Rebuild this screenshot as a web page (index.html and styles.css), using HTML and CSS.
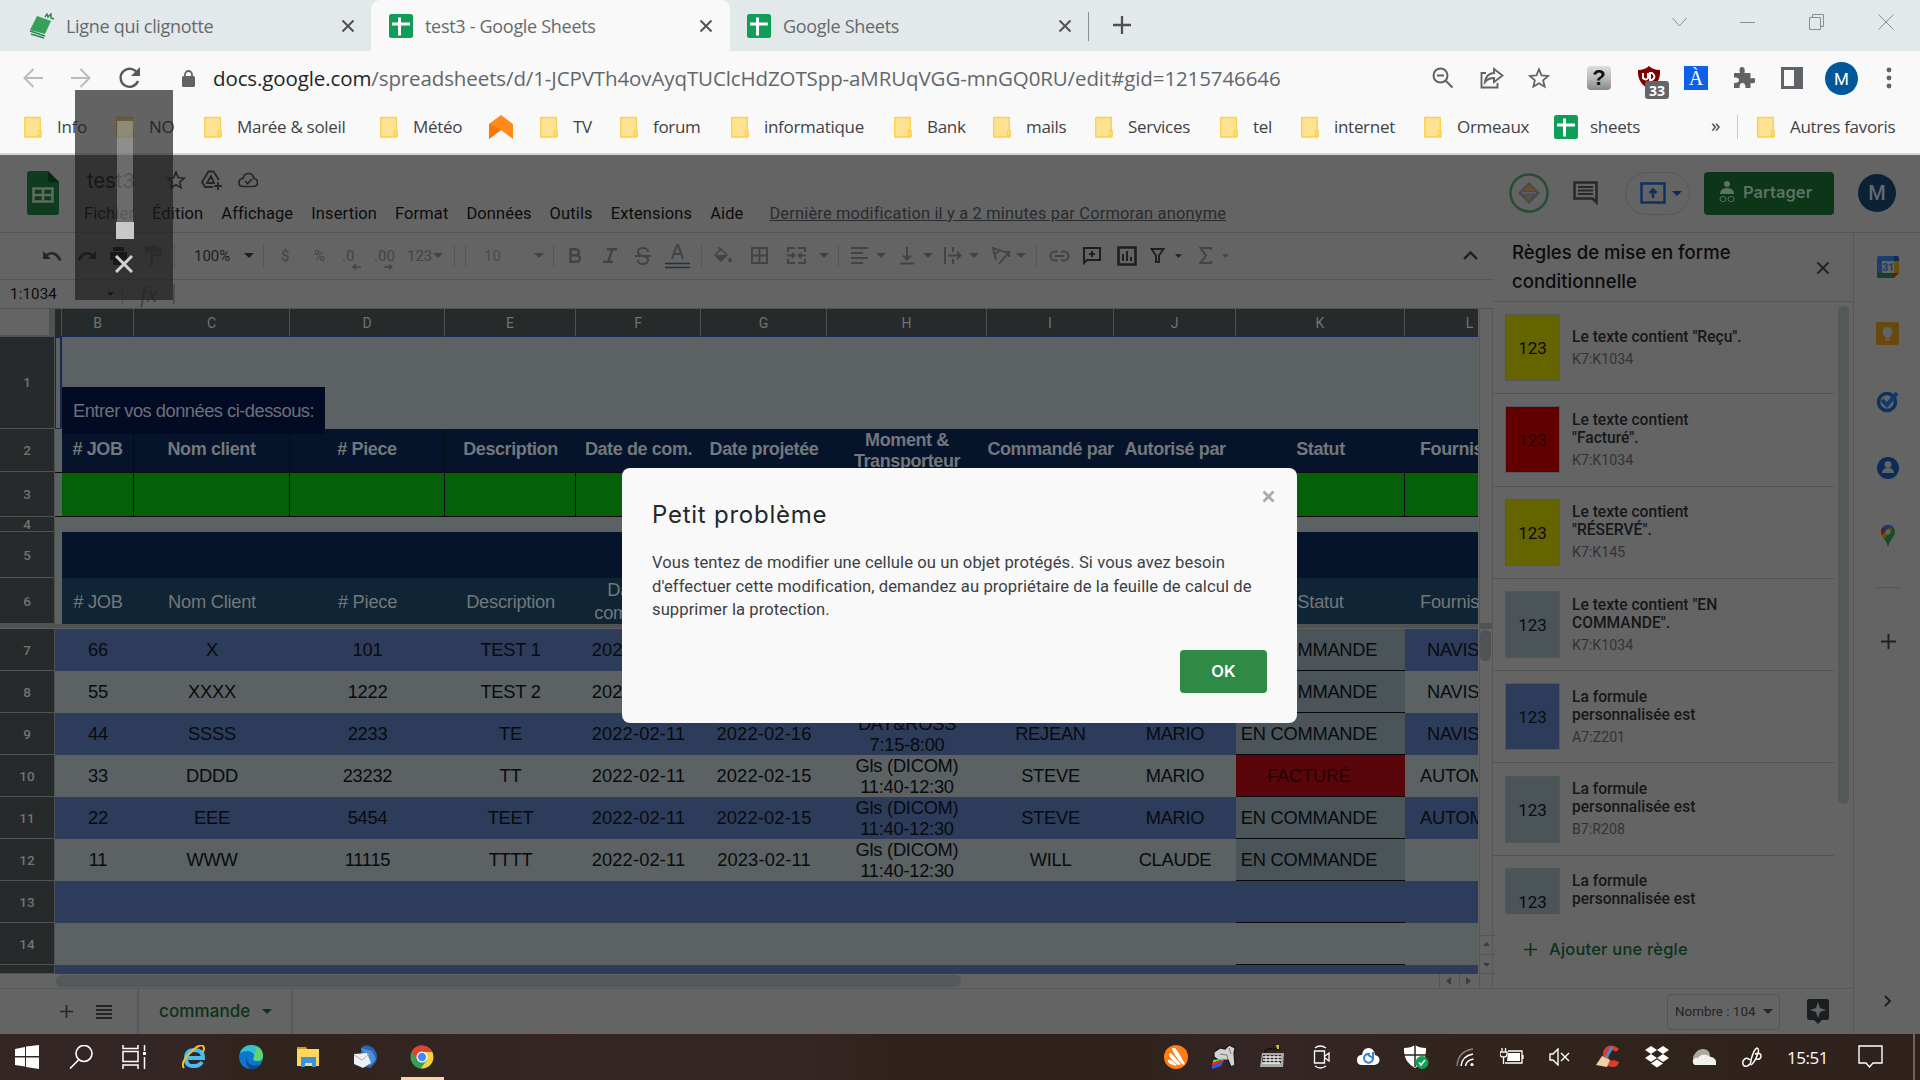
FILE: index.html
```html
<!DOCTYPE html>
<html lang="fr">
<head>
    <meta charset="UTF-8">
    <title>test3 - Google Sheets</title>
    <link rel="stylesheet" href="styles.css">
</head>
<body>

<!-- shared icons -->
<svg class="sprite">
    <symbol id="folder" viewBox="0 0 18 22"><path d="M0 1h16.500v13.500h1.500V21H0z" fill="#fde293"/><path d="M.8 1.500h15.500V14M17 21H.8V1M14.500 20v-5q1.500-2 2.500 0v5z" fill="none" stroke="#fbd04c" stroke-width="1.300"/></symbol>
    <symbol id="sheets" viewBox="0 0 24 24"><rect width="24" height="24" rx="2.500" fill="#0f9d58"/><path d="M3 10h18M10.500 3.500v18" stroke="#fff" stroke-width="3"/></symbol>
    <symbol id="close" viewBox="0 0 14 14"><path d="M1.500 1.500l11 11M12.500 1.500l-11 11" stroke="currentColor" stroke-width="1.900"/></symbol>
    <symbol id="caret" viewBox="0 0 10 5"><path d="M0 0h10L5 5z" fill="currentColor"/></symbol>
    <symbol id="plus" viewBox="0 0 18 18"><path d="M9 0v18M0 9h18" stroke="currentColor" stroke-width="2.300"/></symbol>
    <symbol id="star" viewBox="0 0 24 24"><path d="M12 2.500l2.800 6.700 7.200.6-5.500 4.700 1.700 7L12 17.700l-6.200 3.800 1.700-7L2 9.800l7.200-.6z" fill="none" stroke="currentColor" stroke-width="1.900"/></symbol>
    <symbol id="undo" viewBox="0 0 20 12"><path d="M1 1v8h8L5.800 6q6-4.500 11.200 5l2.500-1Q14-2 4 4z" fill="currentColor"/></symbol>
</svg>

<div class="tabs">
    <div class="tab tab-first">
        <svg width="26" height="26" viewBox="0 0 26 26"><path d="M8 3l14 5-6 13-15-4z" fill="#34a05a"/><path d="M1 18l15 5M2 21l13 4M16 4l2-3 1 3 3-3v4l3 1" stroke="#2b8a4c" stroke-width="1.500" fill="none"/></svg>
        <span>Ligne qui clignotte</span>
        <svg class="x" width="14" height="14"><use href="#close"/></svg>
    </div>
    <div class="tab tab-active">
        <svg width="24" height="24"><use href="#sheets"/></svg>
        <span>test3 - Google Sheets</span>
        <svg class="x" width="14" height="14"><use href="#close"/></svg>
    </div>
    <div class="tab tab-last">
        <svg width="24" height="24"><use href="#sheets"/></svg>
        <span>Google Sheets</span>
        <svg class="x" width="14" height="14"><use href="#close"/></svg>
    </div>
    <svg class="newtab" width="18" height="18"><use href="#plus"/></svg>
    <div class="winbtns">
        <svg width="15" height="16"><path d="M.5 4l7 8 7-8" fill="none" stroke="#8b8e90"/></svg>
        <svg width="15" height="16"><path d="M0 8.500h15" stroke="#8b8e90"/></svg>
        <svg width="16" height="16"><path d="M.5 3.500h11v12h-11zM3.500 3V.5h11v12H12" fill="none" stroke="#8b8e90"/></svg>
        <svg width="16" height="16"><path d="M.5.5l15 15M15.500.5l-15 15" stroke="#8b8e90"/></svg>
    </div>
</div>

<div class="address">
    <svg width="20" height="20"><path d="M20 10H2M10.500 1l-9 9 9 9" fill="none" stroke="#b9bcbe" stroke-width="2"/></svg>
    <svg width="20" height="20"><path d="M0 10h18M9.500 1l9 9-9 9" fill="none" stroke="#b9bcbe" stroke-width="2"/></svg>
    <svg width="22" height="22"><path d="M18.500 6.500A9 9 0 1 0 19 14" fill="none" stroke="#55595c" stroke-width="2.300"/><path d="M21 0v9h-9z" fill="#55595c"/></svg>
    <svg width="13" height="17"><rect y="6" width="13" height="11" rx="1.500" fill="#5f6368"/><path d="M3 7V4.500a3.500 3.500 0 0 1 7 0V7" fill="none" stroke="#5f6368" stroke-width="1.800"/></svg>
    <div class="url"><b>docs.google.com</b>/spreadsheets/d/1-JCPVTh4ovAyqTUClcHdZOTSpp-aMRUqVGG-mnGQ0RU/edit#gid=1215746646</div>
    <svg width="22" height="22"><circle cx="8.500" cy="8.500" r="7" fill="none" stroke="#5f6368" stroke-width="2"/><path d="M5 8.500h7M13.500 13.500l7 7" stroke="#5f6368" stroke-width="2"/></svg>
    <svg width="24" height="22"><path d="M6 6H1.500v14.500h16V16M14 2l8.500 6.500L14 15v-4q-6 0-9 4 1-8.500 9-9z" fill="none" stroke="#5f6368" stroke-width="1.900"/></svg>
    <svg class="grey" width="22" height="24"><use href="#star"/></svg>
    <div class="ext-help">?</div>
    <div class="ublock"><svg width="24" height="24"><path d="M1 4q7 0 11-4 4 4 11 4 1 13-11 19Q0 17 1 4z" fill="#800000"/><path d="M6 7v5q3 3 5 0V7M13 7v7h2q5-3.500 0-7z" fill="none" stroke="#fff" stroke-width="2"/></svg><span>33</span></div>
    <div class="ext-a">À</div>
    <svg width="22" height="22"><path d="M1 6h6q-1.500-6 2-6t2.500 6h6v5.500q5-1.500 5 2t-5 2.500V21h-5q0-5-3-5t-3 5H1v-5q5 0 5-3t-5-2.500z" fill="#5f6368"/></svg>
    <svg width="22" height="22"><path d="M1.500 1.500h19v19h-19z" fill="none" stroke="#5f6368" stroke-width="3"/><path d="M13 0h9v22h-9z" fill="#5f6368"/></svg>
    <div class="avatar">M</div>
    <svg width="6" height="22"><circle cx="3" cy="3" r="2.400" fill="#5f6368"/><circle cx="3" cy="11" r="2.400" fill="#5f6368"/><circle cx="3" cy="19" r="2.400" fill="#5f6368"/></svg>
</div>

<div class="bookmarks">
    <div class="bm"><svg><use href="#folder"/></svg>Info</div>
    <div class="bm"><svg><use href="#folder"/></svg>NO</div>
    <div class="bm"><svg><use href="#folder"/></svg>Marée &amp; soleil</div>
    <div class="bm"><svg><use href="#folder"/></svg>Météo</div>
    <div class="bm"><svg class="flame" viewBox="0 0 24 24"><path d="M0 9L12 0l12 9v15l-12-9-12 9z" fill="#ff8a1c"/><path d="M0 9v15l12-9z" fill="#ff7409"/></svg></div>
    <div class="bm"><svg><use href="#folder"/></svg>TV</div>
    <div class="bm"><svg><use href="#folder"/></svg>forum</div>
    <div class="bm"><svg><use href="#folder"/></svg>informatique</div>
    <div class="bm"><svg><use href="#folder"/></svg>Bank</div>
    <div class="bm"><svg><use href="#folder"/></svg>mails</div>
    <div class="bm"><svg><use href="#folder"/></svg>Services</div>
    <div class="bm"><svg><use href="#folder"/></svg>tel</div>
    <div class="bm"><svg><use href="#folder"/></svg>internet</div>
    <div class="bm"><svg><use href="#folder"/></svg>Ormeaux</div>
    <div class="bm bm-sheet"><svg><use href="#sheets"/></svg>sheets</div>
    <div class="bm more">»</div>
    <div class="bm-sep"></div>
    <div class="bm"><svg><use href="#folder"/></svg>Autres favoris</div>
</div>

<div class="docs">
    <header class="dochead">
        <svg class="logo" width="32" height="44"><path d="M3 0h18l11 11v30q0 3-3 3H3q-3 0-3-3V3q0-3 3-3z" fill="#0f3b1f"/><path d="M21 0l11 11H21z" fill="#092812"/><path d="M6.500 17.500h19v13h-19zM16 17v14M6 24h20" fill="none" stroke="#5d6b61" stroke-width="2.600"/></svg>
        <div class="headmain">
            <div class="title">
                <span>test3</span>
                <svg width="20" height="20"><use href="#star"/></svg>
                <svg width="22" height="20"><path d="M12 17H4l-3-5L7.500 1.500h5L18 10M10 6l-4 7h7zM13 16h8M17 12v8" fill="none" stroke="currentColor" stroke-width="1.800"/></svg>
                <svg width="20" height="16"><path d="M5 14.500q-4 0-4-4t4-4Q6 1.500 10.500 1.500T16 6.500q3.500.5 3.500 4t-3.500 4zM7 9l2.500 2.500L14 7" fill="none" stroke="currentColor" stroke-width="1.700"/></svg>
            </div>
            <nav class="menu">
                <span>Fichier</span><span>Édition</span><span>Affichage</span><span>Insertion</span><span>Format</span><span>Données</span><span>Outils</span><span>Extensions</span><span>Aide</span>
                <span class="lastedit">Dernière modification il y a 2 minutes par Cormoran anonyme</span>
            </nav>
        </div>
        <div class="headright">
            <svg width="40" height="40"><circle cx="20" cy="20" r="18.500" fill="none" stroke="#294d34" stroke-width="2.500"/><path d="M20 9l11 11-11 11L9 20z" fill="#434a50"/><path d="M20 12l7 6H13zM15 22h10l-5 6z" fill="#6a4f2c"/><path d="M13 20h14" stroke="#5b5f62" stroke-width="2"/></svg>
            <svg width="25" height="24"><path d="M1.500 1.500h22v20l-4-4h-18z" fill="none" stroke="#262829" stroke-width="2.500"/><path d="M5 6h15M5 9.500h15M5 13h15" stroke="#262829" stroke-width="2"/></svg>
            <div class="present">
                <svg width="26" height="22"><path d="M1.500 1.500h23v19h-23z" fill="none" stroke="#10305f" stroke-width="2.500"/><path d="M13 16V8M9.500 11l3.500-3.500 3.500 3.500" fill="none" stroke="#10305f" stroke-width="2.500"/></svg>
                <svg width="10" height="5"><use href="#caret"/></svg>
            </div>
            <div class="share">
                <svg width="16" height="22"><circle cx="8" cy="3" r="3" fill="#5e7263"/><path d="M1 13q0-6 7-6t7 6z" fill="#5e7263"/><rect x="1" y="15.500" width="6" height="5" rx="2.500" fill="none" stroke="#5e7263"/><rect x="9" y="15.500" width="6" height="5" rx="2.500" fill="none" stroke="#5e7263"/></svg>
                Partager
            </div>
            <div class="me">M</div>
        </div>
    </header>

    <div class="work">
        <div class="left">
            <div class="toolbar">
                <svg width="20" height="12"><use href="#undo"/></svg>
                <svg class="flip" width="20" height="12"><use href="#undo"/></svg>
                <svg width="19" height="18"><path d="M4 0h11v4H4zM1 5h17v8h-3v5H4v-5H1z" fill="#111"/></svg>
                <svg class="dim" width="17" height="20"><path d="M0 0h13v2h3.500v8H8v10H5V8h9V4h-1v3H0z" fill="currentColor"/></svg>
                <i></i>
                <span class="dark">100%</span>
                <svg class="dark" width="10" height="5"><use href="#caret"/></svg>
                <i></i>
                <span>$</span>
                <span>%</span>
                <span class="dec">.0<svg width="9" height="6"><path d="M9 3H1M4 .5L1 3l3 2.500" fill="none" stroke="currentColor" stroke-width="1.300"/></svg></span>
                <span class="dec">.00<svg width="9" height="6"><path d="M0 3h8M5 .5L8 3 5 5.500" fill="none" stroke="currentColor" stroke-width="1.300"/></svg></span>
                <span>123</span>
                <svg width="10" height="5"><use href="#caret"/></svg>
                <i></i><i></i>
                <span class="dim">10</span>
                <svg width="10" height="5"><use href="#caret"/></svg>
                <i></i>
                <svg width="12" height="15" viewBox="0 0 12 15"><path d="M1.500 1.200h4.500q4 0 4 3t-4 3H2zM2 7.300h5q4 0 4 3.200t-4 3.200H1.500V1" fill="none" stroke="currentColor" stroke-width="2.400"/></svg>
                <svg width="14" height="15"><path d="M4 1.200h10M0 13.800h10M9.500 1L5 14" fill="none" stroke="currentColor" stroke-width="2.400"/></svg>
                <svg width="16" height="18"><path d="M13 5q0-4-5-4T3 5q0 3 5 4 5 .5 5 4t-5 4-5-4M0 9h16" fill="none" stroke="currentColor" stroke-width="1.900"/></svg>
                <svg width="25" height="26"><path d="M7 16L12 2h1l5 14M9 11h7" fill="none" stroke="currentColor" stroke-width="2"/><path d="M0 20.500h25M0 24.500h25" stroke="#27303f" stroke-width="1.500"/></svg>
                <i></i>
                <svg width="19" height="18"><path d="M1 8l6-6 6 6-6 6zM4 0l4 4" stroke="currentColor" fill="none" stroke-width="1.500"/><path d="M1 8h12l-6 6.500zM16 10q4 5 0 5t0-5z" fill="currentColor"/></svg>
                <svg width="17" height="17"><path d="M1 1h15v15H1zM8.500 1v15M1 8.500h15" fill="none" stroke="currentColor" stroke-width="1.900"/></svg>
                <svg width="19" height="17"><path d="M8 1H1v4M11 1h7v4M8 16H1v-4M11 16h7v-4M0 8.500h7M12 8.500h7M5 6l2.500 2.500L5 11M14 6l-2.500 2.500L14 11" fill="none" stroke="currentColor" stroke-width="1.900"/></svg>
                <svg width="10" height="5"><use href="#caret"/></svg>
                <i></i>
                <svg width="17" height="17"><path d="M0 1h17M0 6h12M0 11h17M0 16h12" stroke="currentColor" stroke-width="1.900"/></svg>
                <svg width="10" height="5"><use href="#caret"/></svg>
                <svg width="16" height="18"><path d="M8 0v12M4 8.500l4 4 4-4M1 16.500h14" fill="none" stroke="currentColor" stroke-width="1.900"/></svg>
                <svg width="10" height="5"><use href="#caret"/></svg>
                <svg width="18" height="17"><path d="M1 0v17M9 0v5M9 12v5M4 8.500h12M13 5l3.500 3.500L13 12" fill="none" stroke="currentColor" stroke-width="1.900"/></svg>
                <svg width="10" height="5"><use href="#caret"/></svg>
                <svg width="19" height="18"><path d="M4 13L1 1l12 4M2 8l6-5M7 17L17 5M12 5h5v5" fill="none" stroke="currentColor" stroke-width="1.800"/></svg>
                <svg width="10" height="5"><use href="#caret"/></svg>
                <i></i>
                <svg width="21" height="12"><path d="M9 1.500H6a4.500 4.500 0 0 0 0 9h3M12 1.500h3a4.500 4.500 0 0 1 0 9h-3M6 6h9" fill="none" stroke="currentColor" stroke-width="1.900"/></svg>
                <svg class="dark" width="18" height="18"><path d="M1 1h16v12H4l-3 3zM9 4v6M6 7h6" fill="none" stroke="currentColor" stroke-width="2"/></svg>
                <svg class="dark" width="20" height="20"><path d="M1.500 1.500h17v17h-17z" fill="none" stroke="currentColor" stroke-width="2.600"/><path d="M6 8v7M10 5v10M14 11v4" stroke="currentColor" stroke-width="2"/></svg>
                <svg class="dark" width="15" height="16"><path d="M1.500 1h12L9 7.500V14H6V7.500z" fill="none" stroke="currentColor" stroke-width="1.900"/></svg>
                <svg class="dark" width="7" height="4"><use href="#caret"/></svg>
                <svg width="13" height="17"><path d="M12 3V1H1.500L7 8.500 1.500 16H12v-2" fill="none" stroke="currentColor" stroke-width="2"/></svg>
                <svg width="7" height="4"><use href="#caret"/></svg>
                <svg class="dark" width="15" height="9"><path d="M1 8l6.500-6.500L14 8" fill="none" stroke="currentColor" stroke-width="2.400"/></svg>
            </div>
            <div class="formula">
                <span>1:1034</span>
                <svg width="7" height="4"><use href="#caret"/></svg>
                <em>fx</em>
            </div>

            <div class="gridwrap">
                <div class="sheet">
                    <div class="row colhead"><b></b><b></b><b>B</b><b>C</b><b>D</b><b>E</b><b>F</b><b>G</b><b>H</b><b>I</b><b>J</b><b>K</b><b>L</b></div>
                    <div class="row r1"><b>1</b><div class="sel"></div><div class="banner">Entrer vos données ci-dessous:</div></div>
                    <div class="row r2 navy"><b>2</b><div></div><div># JOB</div><div>Nom client</div><div># Piece</div><div>Description</div><div>Date de com.</div><div>Date projetée</div><div>Moment &amp; Transporteur</div><div>Commandé par</div><div>Autorisé par</div><div>Statut</div><div>Fournisseur</div></div>
                    <div class="row r3"><b>3</b><div></div><div></div><div></div><div></div><div></div><div></div><div></div><div></div><div></div><div></div><div></div><div></div></div>
                    <div class="row r4"><b>4</b></div>
                    <div class="row r5 navy"><b>5</b><div></div><div></div></div>
                    <div class="row r6"><b>6</b><div></div><div># JOB</div><div>Nom Client</div><div># Piece</div><div>Description</div><div>Date de<br>commande</div><div></div><div></div><div></div><div></div><div>Statut</div><div>Fournisseur</div></div>
                    <div class="freeze"></div>
                    <div class="row data odd"><b>7</b><div></div><div>66</div><div>X</div><div>101</div><div>TEST 1</div><div class="d">2022-02-11</div><div></div><div></div><div></div><div></div><div>EN COMMANDE</div><div class="nav">NAVISTAR</div></div>
                    <div class="row data"><b>8</b><div></div><div>55</div><div>XXXX</div><div>1222</div><div>TEST 2</div><div class="d">2022-02-11</div><div></div><div></div><div></div><div></div><div>EN COMMANDE</div><div class="nav">NAVISTAR</div></div>
                    <div class="row data odd"><b>9</b><div></div><div>44</div><div>SSSS</div><div>2233</div><div>TE</div><div class="d">2022-02-11</div><div class="d">2022-02-16</div><div>DAY&amp;ROSS<br>7:15-8:00</div><div>REJEAN</div><div>MARIO</div><div>EN COMMANDE</div><div class="nav">NAVISTAR</div></div>
                    <div class="row data"><b>10</b><div></div><div>33</div><div>DDDD</div><div>23232</div><div>TT</div><div class="d">2022-02-11</div><div class="d">2022-02-15</div><div>Gls (DICOM)<br>11:40-12:30</div><div>STEVE</div><div>MARIO</div><div class="red">FACTURÉ</div><div>AUTOMANN</div></div>
                    <div class="row data odd"><b>11</b><div></div><div>22</div><div>EEE</div><div>5454</div><div>TEET</div><div class="d">2022-02-11</div><div class="d">2022-02-15</div><div>Gls (DICOM)<br>11:40-12:30</div><div>STEVE</div><div>MARIO</div><div>EN COMMANDE</div><div>AUTOMANN</div></div>
                    <div class="row data"><b>12</b><div></div><div>11</div><div>WWW</div><div>11115</div><div>TTTT</div><div class="d">2022-02-11</div><div class="d">2023-02-11</div><div>Gls (DICOM)<br>11:40-12:30</div><div>WILL</div><div>CLAUDE</div><div>EN COMMANDE</div><div></div></div>
                    <div class="row data odd empty"><b>13</b><div></div><div></div></div>
                    <div class="row data empty"><b>14</b><div></div><div></div></div>
                    <div class="row data odd last"><b></b></div>
                    <div class="hscroll">
                        <div class="hthumb"></div>
                        <svg width="38" height="14"><path d="M.5 0v14M20.500 0v14" stroke="#535657"/><path d="M12 3v8L7 7zM27 3v8l5-4z" fill="#3b3c3d"/></svg>
                    </div>
                </div>
                <div class="vscroll">
                    <div class="vbar"></div>
                    <div class="vthumb"></div>
                    <svg width="15" height="40"><path d="M0 .5h15M0 19.500h15M0 38.500h15" stroke="#535657"/><path d="M3 11h7L6.500 7zM3 28h7l-3.500 4z" fill="#3b3c3d"/></svg>
                </div>
            </div>
        </div>

        <aside class="panel">
            <div class="panelhead"><h2>Règles de mise en forme conditionnelle</h2><svg width="14" height="14"><use href="#close"/></svg></div>
            <div class="rules">
                <div class="list">
                    <div class="rule"><div class="sw yellow">123</div><p>Le texte contient "Reçu".<small>K7:K1034</small></p></div>
                    <div class="rule"><div class="sw crimson">123</div><p>Le texte contient "Facturé".<small>K7:K1034</small></p></div>
                    <div class="rule"><div class="sw yellow">123</div><p>Le texte contient "RÉSERVÉ".<small>K7:K145</small></p></div>
                    <div class="rule"><div class="sw slate">123</div><p>Le texte contient "EN COMMANDE".<small>K7:K1034</small></p></div>
                    <div class="rule"><div class="sw blue">123</div><p>La formule personnalisée est<small>A7:Z201</small></p></div>
                    <div class="rule"><div class="sw slate">123</div><p>La formule personnalisée est<small>B7:R208</small></p></div>
                    <div class="rule"><div class="sw slate">123</div><p>La formule personnalisée est<small>&nbsp;</small></p></div>
                </div>
                <div class="pthumb"></div>
            </div>
            <div class="addrule"><svg width="13" height="13"><use href="#plus"/></svg>Ajouter une règle</div>
        </aside>

        <div class="rail">
            <svg width="24" height="24"><path d="M3 1h15v5H6v12H1V3q0-2 2-2z" fill="#1c3c6d"/><path d="M18 1h3q2 0 2 2v3h-5z" fill="#152b4e"/><path d="M18 6h5v12h-5z" fill="#6a4f0c"/><path d="M1 18h17v5H3q-2 0-2-2z" fill="#0f4420"/><path d="M18 18h5l-5 5z" fill="#5f1b15"/><path d="M6 6h12v12H6z" fill="#616365"/><text x="6.500" y="16" font-size="10" font-weight="700" fill="#1c3c6d">31</text></svg>
            <svg width="24" height="24"><rect width="23" height="23" rx="2" fill="#67490f"/><circle cx="11.500" cy="10" r="5" fill="#636363"/><path d="M9 14h5v2H9zM9 17h5v1.500H9z" fill="#636363"/></svg>
            <svg width="24" height="24"><circle cx="11" cy="13" r="8.500" fill="none" stroke="#0b335c" stroke-width="3.500"/><path d="M6 11l5 5L21 4" fill="none" stroke="#0d3d70" stroke-width="4"/></svg>
            <svg width="24" height="24"><circle cx="12" cy="12" r="11" fill="#0b2c57"/><circle cx="12" cy="8.500" r="3.500" fill="#626364"/><path d="M6 17q0-5 6-5t6 5z" fill="#626364"/></svg>
            <svg width="24" height="24"><path d="M12 2a7 7 0 0 0-7 7q0 3 4 8 2 3 3 7 1-4 3-7 4-5 4-8a7 7 0 0 0-7-7z" fill="#164c25"/><path d="M12 2a7 7 0 0 0-6 3l5 4 6-6q-2-1-5-1z" fill="#1b3b68"/><path d="M6 5q-2 3 0 7l5-5z" fill="#5f1b15"/><path d="M6 12l8-8 2 3-8 9z" fill="#6a4f0c"/><circle cx="12" cy="9" r="2.600" fill="#646464"/></svg>
            <hr>
            <svg class="dark add" width="15" height="15"><use href="#plus"/></svg>
            <svg class="dark chev" width="8" height="12"><path d="M1 1l5 5-5 5" fill="none" stroke="currentColor" stroke-width="2"/></svg>
        </div>
    </div>

    <footer class="sheetbar">
        <svg width="13" height="13"><use href="#plus"/></svg>
        <svg width="16" height="14"><path d="M0 1h16M0 5h16M0 9h16M0 13h16" stroke="currentColor" stroke-width="2.200"/></svg>
        <div class="sheettab">commande<svg width="10" height="5"><use href="#caret"/></svg></div>
        <div class="count">Nombre : 104<svg width="10" height="5"><use href="#caret"/></svg></div>
        <svg width="22" height="25"><path d="M2 0h18q2 0 2 2v17q0 2-2 2h-5l-4 4-4-4H2q-2 0-2-2V2q0-2 2-2z" fill="#1b1f22"/><path d="M11 3l2 6 6 2-6 2-2 6-2-6-6-2 6-2z" fill="#646464"/></svg>
    </footer>
</div>

<div class="taskbar">
    <svg width="24" height="24"><path d="M0 4l10-2v9H0zM11 1.500L24 0v11H11zM0 12.500h10v9L0 20zM11 12.500h13V24l-13-2z" fill="#fff"/></svg>
    <svg width="24" height="24"><circle cx="15" cy="8.500" r="8" fill="none" stroke="#fff" stroke-width="1.600"/><path d="M9.500 15L1 23.500" stroke="#fff" stroke-width="1.600"/></svg>
    <svg width="25" height="24"><path d="M1 0v3.500h15V0M1 6.500h15v10H1zM1 24v-4h15v4M22.500 0v6M22.500 12v12" fill="none" stroke="#fff" stroke-width="1.500"/><path d="M21 7h3v3h-3z" fill="#fff"/></svg>
    <svg width="24" height="24"><path d="M6 13h15q0-8-8.500-8T4 13.500 12.500 21q5 0 7.500-4" fill="none" stroke="#48bdf2" stroke-width="4"/><path d="M2 23Q-2 18 8 8T21 1q2 2 0 6" fill="none" stroke="#f5bd24" stroke-width="2"/></svg>
    <svg width="24" height="24"><circle cx="12" cy="12" r="12" fill="#0b78d0"/><path d="M1 8Q4 0 12 0q11 0 12 10 0 6-6 6-5 0-3-4 1-5-6-6-5 0-8 2z" fill="#35c1d0"/><path d="M18 2q6 3 6 9 0 5-6 5-5 0-3-4z" fill="#61d66b"/><path d="M9 10q-3 7 3 9.500 5 2 9 0Q17 24 12 24q-8-4-3-14z" fill="#114a8b"/></svg>
    <svg width="23" height="24"><path d="M0 2h9l2 3H0z" fill="#d99a12"/><path d="M0 4h22v17H0z" fill="#ffd75e"/><path d="M4 12h15v10h-4v-4H8v4H4z" fill="#3894db"/></svg>
    <svg width="24" height="24"><path d="M8 3q4-5 11-1 5 4 5 10t-7 11L8 21z" fill="#2a62b6"/><path d="M8 3l11 3 4 8-6 7z" fill="#4c91d5"/><path d="M1 9l13-1 4 10-8 5-9-4z" fill="#eef0f3"/><path d="M1 10l8 5 7-6" fill="none" stroke="#a8afb8"/></svg>
    <svg width="24" height="24"><circle cx="12" cy="12" r="11.500" fill="#32a350"/><path d="M2 6Q5 .5 12 .5T22 7H12L6.500 15z" fill="#dd4437"/><path d="M12 7h10.300q3 9-3.300 14-4 3-8 2.300L17 15z" fill="#fdd03b"/><circle cx="12" cy="12" r="5.500" fill="#fff"/><circle cx="12" cy="12" r="4.200" fill="#4587f3"/></svg>
    <!-- notification area -->
    <svg width="24" height="24"><circle cx="12" cy="12" r="12" fill="#ff7d14"/><path d="M8 4q0-2 3-1 3 3 10 16-2 2-4-1Q9 8 8 4zM5 9q1-2 3 0l9 10q-2 2-4 0Q4 12 5 9zM4 15q3-1 9 5-2 1-4 0-6-2-5-5z" fill="#fff"/></svg>
    <svg width="24" height="24"><path d="M2 7l6-4 5 1 4-4 6 3-1 5 1 12-4 2-3-7-8 1-6-4z" fill="#d0d2d3" stroke="#161616" stroke-width="1.200"/><path d="M8 9l7 1 1 5M17 3l2 6" fill="none" stroke="#777"/><path d="M1 15l13-2-13 5z" fill="#42e455"/><path d="M0 18l13-4-2 3-11 4z" fill="#e22a2a"/><path d="M0 21l11-4-2 4-9 3z" fill="#3557ee"/></svg>
    <svg width="24" height="24"><path d="M2 8h22l-1 14H0z" fill="#a9aaa8"/><path d="M3 10h18v8H2z" fill="#2a2a2a"/><path d="M3 12h18M3 15h18M2 18h18" stroke="#eee" stroke-width="1.400"/><path d="M6 10v8M10 10v8M14 10v8M18 10v8" stroke="#eee"/><path d="M5 7q1-4 7-3t8-1" stroke="#0c0c0c" stroke-width="2" stroke-dasharray="2 1" fill="none"/><path d="M16 0h3v4h-2z" fill="#c5c220"/></svg>
    <svg width="18" height="24"><path d="M1.500 6h10v12h-10zM12 11l4-3v8l-4-3M2 3q5-4 11 0M2 21q5 4 11 0" fill="none" stroke="#fff" stroke-width="1.300"/></svg>
    <svg width="23" height="18"><path d="M5 17q-5 0-5-5t5-5Q6 0 11.500 0T18 7q4.500 1 4.500 5t-5 5z" fill="#fff"/><path d="M13 6a4.500 4.500 0 1 0 3 4M16 4v6l-5-3" fill="none" stroke="#3383dc" stroke-width="2"/></svg>
    <svg width="25" height="24"><path d="M0 3q7 0 11-3 4 3 11 3 1 14-11 20Q-1 17 0 3z" fill="#fff"/><path d="M11 0v22M0 10h22" stroke="#30241e" stroke-width="1.500"/><circle cx="18" cy="17.500" r="6.500" fill="#12a150"/><path d="M15 17.500l2 2.500 4-5" fill="none" stroke="#fff" stroke-width="1.600"/></svg>
    <svg width="18" height="18"><path d="M1 18Q2 3 17 1" fill="none" stroke="#8f8986" stroke-width="1.300"/><path d="M5 18Q6 8 17 6M9.500 18q1-6 8-7" fill="none" stroke="#fff" stroke-width="1.500"/><circle cx="16" cy="16.500" r="1.600" fill="#fff"/></svg>
    <svg width="24" height="18"><path d="M8 3h14v12H5M23 7v4" fill="none" stroke="#fff" stroke-width="1.300"/><path d="M8 5h12v8H7z" fill="#fff"/><path d="M2 0v3M5.500 0v3M0 4h7v2q0 3-3.500 3T0 6zM3.500 9v7" fill="none" stroke="#fff" stroke-width="1.300"/></svg>
    <svg width="22" height="18"><path d="M1 6h3l5-5v16l-5-5H1zM12 5l8 8M20 5l-8 8" fill="none" stroke="#fff" stroke-width="1.400"/></svg>
    <svg width="25" height="24"><path d="M23 4Q18-1 12 1 6 4 7 12q2 10 10 10 5 0 6-5l-5-2q-3 2-5-1-2-5 1-8 4-2 6 1z" fill="#db3c2b"/><path d="M16 2L10 13" stroke="#3f8ccd" stroke-width="3"/><path d="M6 11l8 4-3 7-11-2z" fill="#f2cfa4"/></svg>
    <svg width="24" height="22"><path d="M6 0l6 4-6 4-6-4zM18 0l6 4-6 4-6-4zM6 8l6 4-6 4-6-4zM18 8l6 4-6 4-6-4zM12 13.500l6 4-6 4-6-4z" fill="#fff"/></svg>
    <svg width="24" height="18"><path d="M1 9Q5 0 12 1q6 1 6 7l-5 5-12 2z" fill="#aca89c"/><path d="M3 17q-3-1-2-5 2-3 5-2 3-5 9-3 2 1 4 2 6 1 5 8z" fill="#f0f0ee"/></svg>
    <svg width="22" height="22"><path d="M8 14q-4-4-7 1-1 6 4 5 4-1 4-6 3-11 6-12 3 1 0 8t-6 9M13 8q6-2 6 2t-5 3" fill="none" stroke="#fff" stroke-width="1.500"/></svg>
    <time>15:51</time>
    <svg width="25" height="24"><path d="M1 1h23v17h-9l-3.500 4L8 18H1z" fill="none" stroke="#fff" stroke-width="1.400"/></svg>
    <div class="peek"></div>
</div>

<div class="modal">
    <svg width="13" height="13"><path d="M1.500 1.500l10 10M11.500 1.500l-10 10" stroke="currentColor" stroke-width="2.800"/></svg>
    <h1>Petit problème</h1>
    <p>Vous tentez de modifier une cellule ou un objet protégés. Si vous avez besoin<br>d'effectuer cette modification, demandez au propriétaire de la feuille de calcul de<br>supprimer la protection.</p>
    <button>OK</button>
</div>

<!-- floating volume slider -->
<div class="volume">
    <div class="track"></div>
    <div class="knob"></div>
    <svg width="18" height="18"><path d="M1 1l16 16M17 1L1 17" stroke="currentColor" stroke-width="3"/></svg>
</div>

</body>
</html>
```

FILE: styles.css
```css
* { box-sizing: border-box; }
body { margin: 0; width: 1920px; height: 1080px; overflow: hidden; background: #f9f9f9; font-family: Roboto, "Liberation Sans", sans-serif; }
svg { display: block; flex: none; }
.sprite { display: none; }

/* Browser chrome */
.tabs { display: flex; height: 51px; background: #e3e8ea; font: 18px "Open Sans", sans-serif; letter-spacing: -0.3px; color: #666a6d; }
.tab { display: flex; align-items: center; height: 51px; padding-bottom: 1px; }
.tab span { flex: 1; margin-left: 12px; white-space: nowrap; }
.tab .x { color: #4d5154; }
.tab-first { width: 371px; padding: 0 16px 0 29px; }
.tab-first span { margin-left: 11px; }
.tab-active { width: 359px; padding: 0 17px 0 18px; background: #f9f9f9; border-radius: 9px 9px 0 0; }
.tab-last { width: 359px; padding: 0 17px 0 17px; position: relative; }
.tab-last::after { content: ""; position: absolute; right: 0; top: 12px; width: 1px; height: 29px; background: #8c9092; }
.newtab { margin: 16px 0 0 24px; color: #4d5154; }
.winbtns { display: flex; gap: 53.500px; margin: 14px 0 0 auto; padding-right: 26px; }
.address { display: grid; grid-template-columns: 48px 48px 63px 31px 1219px 48px 48px 59px 50px 47px 49px 48px 43px 62px 10px; align-items: center; height: 54px; padding-left: 23px; }
.url { font: 20.500px "Open Sans", sans-serif; letter-spacing: -0.11px; color: #63676a; white-space: nowrap; }
.url b { font-weight: 400; color: #222527; }
.grey { color: #5f6368; }
.ext-help { width: 24px; height: 24px; border-radius: 4px; background: linear-gradient(#ddd, #bbb 50%, #888); font: bold 22px/24px "Liberation Sans", sans-serif; text-align: center; color: #111; }
.ublock { position: relative; }
.ublock span { position: absolute; left: 8px; top: 15px; width: 24px; height: 18px; border-radius: 3px; background: #636668; color: #fff; font: bold 14px/19px "Open Sans", sans-serif; text-align: center; }
.ext-a { width: 24px; height: 24px; background: #0f60e8; color: #fff; font: 20px/24px "Liberation Serif", serif; text-align: center; }
.avatar { width: 33px; height: 33px; margin-left: 1px; border-radius: 50%; background: #01579b; color: #fff; font-size: 17px; line-height: 34px; text-align: center; }
.bookmarks { display: grid; grid-template-columns: 92px 88px 176px 109px 51px 80px 111px 163px 99px 102px 125px 81px 123px 130px 157px 26px 20px 150px; align-items: center; height: 50px; padding: 0 0 6px 24px; border-bottom: 2px solid #d4d7d8; font: 17px "Open Sans", sans-serif; letter-spacing: -0.3px; color: #3f4346; }
.bm { display: flex; align-items: center; gap: 15px; white-space: nowrap; line-height: 40px; }
.bm svg { width: 18px; height: 22px; }
.bm-sheet { gap: 12px; }
.bm-sheet svg, .bm .flame { width: 24px; height: 24px; }
.more { font-size: 19px; padding-bottom: 3px; }
.bm-sep { width: 1px; height: 24px; background: #c5c8ca; }

/* Document */
.docs { height: 879px; background: #646464; color: #0b0c0d; }
.dochead { display: flex; height: 78px; border-bottom: 1px solid #535657; }
.logo { margin: 16px 0 0 27px; }
.headmain { margin: 9px 0 0 25px; }
.title { display: flex; align-items: center; height: 32px; color: #232627; }
.title span { width: 48px; margin: 0 31px 0 3px; font: 20.500px Inter, sans-serif; letter-spacing: -0.2px; color: #0b0c0d; }
.title svg + svg { margin-left: 15px; }
.menu { display: flex; gap: 18px; margin-top: 8px; font-size: 16.400px; line-height: 20px; letter-spacing: 0.16px; white-space: nowrap; }
.menu .lastedit { margin-left: 8px; color: #292b2d; text-decoration: underline; letter-spacing: 0.19px; }
.headright { display: flex; align-items: center; height: 76px; margin-left: auto; padding-right: 24px; }
.headright > svg:nth-child(2) { margin-left: 24px; }
.present { display: flex; align-items: center; gap: 6px; width: 65px; height: 43px; margin: 0 14px 0 27px; padding-left: 14px; border: 1px solid #555859; border-radius: 22px; color: #0b2a5a; }
.share { display: flex; align-items: center; gap: 8px; width: 130px; height: 43px; padding: 0 0 3px 15px; border-radius: 4px; background: #0d3517; color: #5e7263; font: 600 16.500px Inter, sans-serif; letter-spacing: 0.05px; }
.me { width: 38px; height: 38px; margin-left: 24px; border-radius: 50%; background: #0b2136; color: #5f6a74; font: 500 20px/39px Roboto, sans-serif; text-align: center; }

.work { display: flex; height: 755px; }
.left { width: 1493px; }
.toolbar { display: grid; grid-template-columns: 35px 32px 36px 29px 20px 50px 19px 18px 33px 28px 32px 33px 26px 21px 11px 19px 50px 19px 16px 34px 32px 30px 36px 13px 37px 36px 32px 19px 13px 25px 23px 24px 21px 25px 23px 24px 20px 13px 34px 34px 33px 25px 24px 23px 241px 15px; align-items: center; height: 47px; padding: 0 0 1px 42px; border-bottom: 1px solid #535657; font-size: 15px; color: #414446; }
.toolbar i { width: 1px; height: 24px; background: #54585a; }
.toolbar > svg:first-child { color: #252829; }
.toolbar .dark, .dark { color: #1d2022; }
.dim { color: #484c4e; }
.flip { transform: scaleX(-1); color: #1a1c1d; }
.dec { position: relative; }
.dec svg { position: absolute; left: 10px; top: 17px; }
.formula { display: flex; align-items: center; height: 29px; padding: 0 0 1px 10px; border-bottom: 1px solid #505353; font-size: 15px; letter-spacing: 0.2px; }
.formula span { width: 97px; }
.formula em { width: 53px; margin-left: 8px; padding-left: 17px; border-left: 1px solid #4c4f51; border-right: 2px solid #4a5259; font: italic 24px/20px "Liberation Serif", serif; color: #414446; }

/* Grid */
.gridwrap { display: flex; height: 679px; }
.sheet { width: 1479px; }
.row { display: grid; grid-template-columns: 55px 7px 72px 156px 155px 131px 125px 126px 160px 127px 122px 169px 73px; width: 1478px; background: #5c6163; font: 18.300px/21px "Liberation Sans", sans-serif; letter-spacing: -0.25px; color: #090b0d; }
.row > div { display: flex; align-items: center; justify-content: center; text-align: center; overflow: hidden; white-space: nowrap; }
.row > b { display: flex; align-items: center; justify-content: center; background: #262a2a; border-right: 1px solid #505353; border-bottom: 1px solid #505353; font: 500 13.500px Roboto, sans-serif; letter-spacing: 0; color: #717474; }
.colhead { height: 28px; }
.colhead b { padding-top: 1px; border-bottom: 2px solid #142c54; font-weight: 400; font-size: 14px; }
.colhead b:first-child { background: #646464; border-right: 6px solid #505353; border-bottom: 2px solid #505353; }
.colhead b:last-child { padding-left: 56px; border-right: 0; }
.r1 { height: 92px; }
.r1 > b { padding-bottom: 2px; }
.r1 .sel { border: 1px solid #142c54; border-right-width: 2px; }
.row .banner { position: relative; z-index: 1; grid-column: 3 / 6; align-self: end; width: 263px; height: 47px; margin-bottom: -5px; background: #020a24; color: #6d7078; letter-spacing: -0.5px; }
.r2 { height: 43px; }
.r2, .r6 { color: #74777b; }
.r2 > div { padding-bottom: 2px; font-weight: 700; font-size: 18px; letter-spacing: -0.4px; border-right: 1px solid #030b17; }
.navy > div, .r6 > div { background: #05142a; }
.r2 > div:nth-child(2), .r3 > div:nth-child(2), .r5 > div:nth-child(2), .r6 > div:nth-child(2) { background: #5c6163; border-right: 0; }
.r2 > div:nth-child(n+6) { border-right: 0; }
.r2 > div:nth-child(9) { white-space: normal; align-items: flex-start; padding: 1px 20px 0; }
.r3 { height: 45px; }
.r3 > div { background: #04610a; border: solid #070a08; border-width: 1px 1px 1px 0; }
.r3 > div:last-child { border-right: 0; }
.r4 { height: 15px; }
.r4 > b { line-height: 12px; padding-bottom: 1px; }
.r5 { height: 46px; }
.r5 > div:nth-child(3) { grid-column: 3 / 14; }
.r6 { height: 46px; }
.r6 > div { background: #0f2434; }
.r6 > div:nth-child(7) { line-height: 23px; }
.r2 > div:last-child, .r6 > div:last-child, .data > div:last-child { justify-content: flex-start; padding-left: 15px; }
.freeze { width: 1478px; height: 5px; background: #505353; border-bottom: 1px solid #5c6163; }
.data { height: 42px; }
.data > div { padding-bottom: 1px; }
.data.odd { background: #2d3c5b; }
.data .d { letter-spacing: 0.15px; }
.data > div:nth-child(12) { padding-right: 23px; background: #4b5459; border-bottom: 1px solid #07090b; }
.data > div.red { background: #5a0509; color: #200203; }
.data > div.nav { padding-left: 22px; }
.data.empty > div:nth-child(3) { grid-column: 12; border-bottom: 1px solid #07090b; }
.data.last { height: 9px; }
.hscroll { display: flex; justify-content: space-between; height: 14px; width: 1477px; padding-left: 56px; }
.hthumb { width: 905px; height: 12px; margin-top: 1px; border-radius: 6px; background: #555858; }
.vscroll { display: flex; flex-direction: column; width: 14px; border: solid #555859; border-width: 0 1px; }
.vbar { height: 6px; margin-top: 314px; background: #505353; }
.vthumb { width: 11px; height: 31px; margin-top: 1px; border-radius: 6px; background: #505355; }
.vscroll svg { margin-top: auto; margin-bottom: 13px; }

/* Conditional format panel */
.panel { width: 361px; border-right: 1px solid #555859; }
.panelhead { display: flex; justify-content: space-between; height: 69px; padding: 5px 23px 0 19px; border-bottom: 1px solid #535657; }
.panelhead h2 { width: 240px; margin: 0; font: 450 18.500px/29px Inter, sans-serif; letter-spacing: 0.03px; }
.panelhead svg { margin-top: 23px; color: #202325; }
.rules { display: flex; height: 612px; }
.list { width: 341px; overflow: hidden; }
.rule { display: flex; align-items: center; height: 92.300px; padding-left: 12px; border-bottom: 1px solid #4c5256; }
.sw { flex: none; width: 55px; height: 67px; border: 1px solid #52575a; font-size: 17px; line-height: 66px; text-align: center; }
.yellow { background: #646400; }
.crimson { background: #620000; color: #250203; }
.slate { background: #4b5459; }
.blue { background: #2d3c5b; }
.rule p { width: 175px; margin: 0 0 0 12px; font-size: 15.600px; font-weight: 500; line-height: 18px; color: #151719; }
.rule small { display: block; margin-top: 4px; font-size: 14.200px; font-weight: 400; color: #303335; }
.pthumb { width: 11px; height: 498px; margin: 4px 0 0 4px; border-radius: 6px; background: #535859; }
.addrule { display: flex; align-items: center; gap: 12px; height: 70px; padding-left: 31px; font: 500 16.500px Inter, sans-serif; letter-spacing: 0.2px; color: #0c3217; }

.rail { display: flex; flex-direction: column; align-items: center; gap: 43px; width: 66px; padding: 22px 0 0 2px; }
.rail hr { width: 24px; margin: -3px 0 0; border: 0; border-top: 1px solid #535657; }
.rail text { font-family: Roboto, sans-serif; }
.rail .add { margin-top: 3px; }
.rail .chev { margin-top: 303px; }

.sheetbar { display: flex; align-items: center; width: 1854px; height: 46px; border-top: 1px solid #53595c; border-right: 1px solid #555859; color: #222526; }
.sheetbar > svg:nth-child(1) { margin-left: 60px; }
.sheetbar > svg:nth-child(2) { margin-left: 23px; }
.sheettab { display: flex; align-items: center; gap: 12px; height: 45px; width: 156px; margin-left: 25px; padding: 0 0 1px 20px; border: solid #53595c; border-width: 0 2px; font: 500 17px Inter, sans-serif; letter-spacing: 0.1px; color: #0c3217; }
.count { display: flex; align-items: center; gap: 8px; width: 113px; height: 36px; margin: 0 27px 0 auto; padding-left: 7px; border: 1px solid #535657; border-radius: 4px; font-size: 13.400px; white-space: nowrap; }
.sheetbar > svg:last-child { margin-right: 24px; }

/* Windows taskbar */
.taskbar { position: relative; display: grid; grid-template-columns: 54px 53px 60px 57px 58px 56px 57px 754px 48px 48px 53px 44px 47px 52px 44px 49px 47px 49px 47px 50px 45px 71px 55px 7px; align-items: center; height: 46px; padding-left: 15px; background: linear-gradient(90deg, #352626 0 10%, #30241c 13%, #352626 32%, #352626 42%, #30231b 46% 60%, #352626 64%, #30241c 80%, #2f221c); }
.taskbar::after { content: ""; position: absolute; left: 401px; bottom: 0; width: 43px; height: 3px; background: #f6d5a6; }
.taskbar time { font: 17px "Open Sans", sans-serif; letter-spacing: -0.5px; color: #fff; }
.peek { width: 2px; height: 46px; background: #6d625d; }

/* Dialog */
.modal { position: absolute; left: 622px; top: 468px; width: 675px; height: 255px; padding: 31px 30px; border-radius: 8px; background: #f9f9f9; color: #3c4043; }
.modal::before { content: ""; position: absolute; left: -13px; top: -8px; width: 701px; height: 280px; border: 1px solid rgba(0, 0, 0, .15); border-radius: 18px; z-index: -1; }
.modal svg { position: absolute; right: 22px; top: 22px; color: #a9abad; }
.modal h1 { margin: 0; font: 400 24px/31px Inter, sans-serif; letter-spacing: 0.75px; color: #242729; }
.modal p { margin: 21px 0 0; font-size: 16.600px; line-height: 23.500px; letter-spacing: 0.08px; white-space: nowrap; }
.modal button { display: block; width: 87px; height: 43px; margin: 28px 0 0 528px; border: 0; border-radius: 4px; background: #2e8a45; color: #fff; font: 600 16.500px Inter, sans-serif; }

.volume { position: absolute; left: 75px; top: 90px; width: 98px; height: 210px; padding-top: 31px; background: rgba(28, 28, 30, .68); color: #d0d0d0; }
.track { width: 16px; height: 101px; margin-left: 42px; background: rgba(255, 255, 255, .28); }
.knob { width: 18px; height: 17px; margin-left: 41px; background: #c8c8c8; }
.volume svg { margin: 16px 0 0 40px; }
```
